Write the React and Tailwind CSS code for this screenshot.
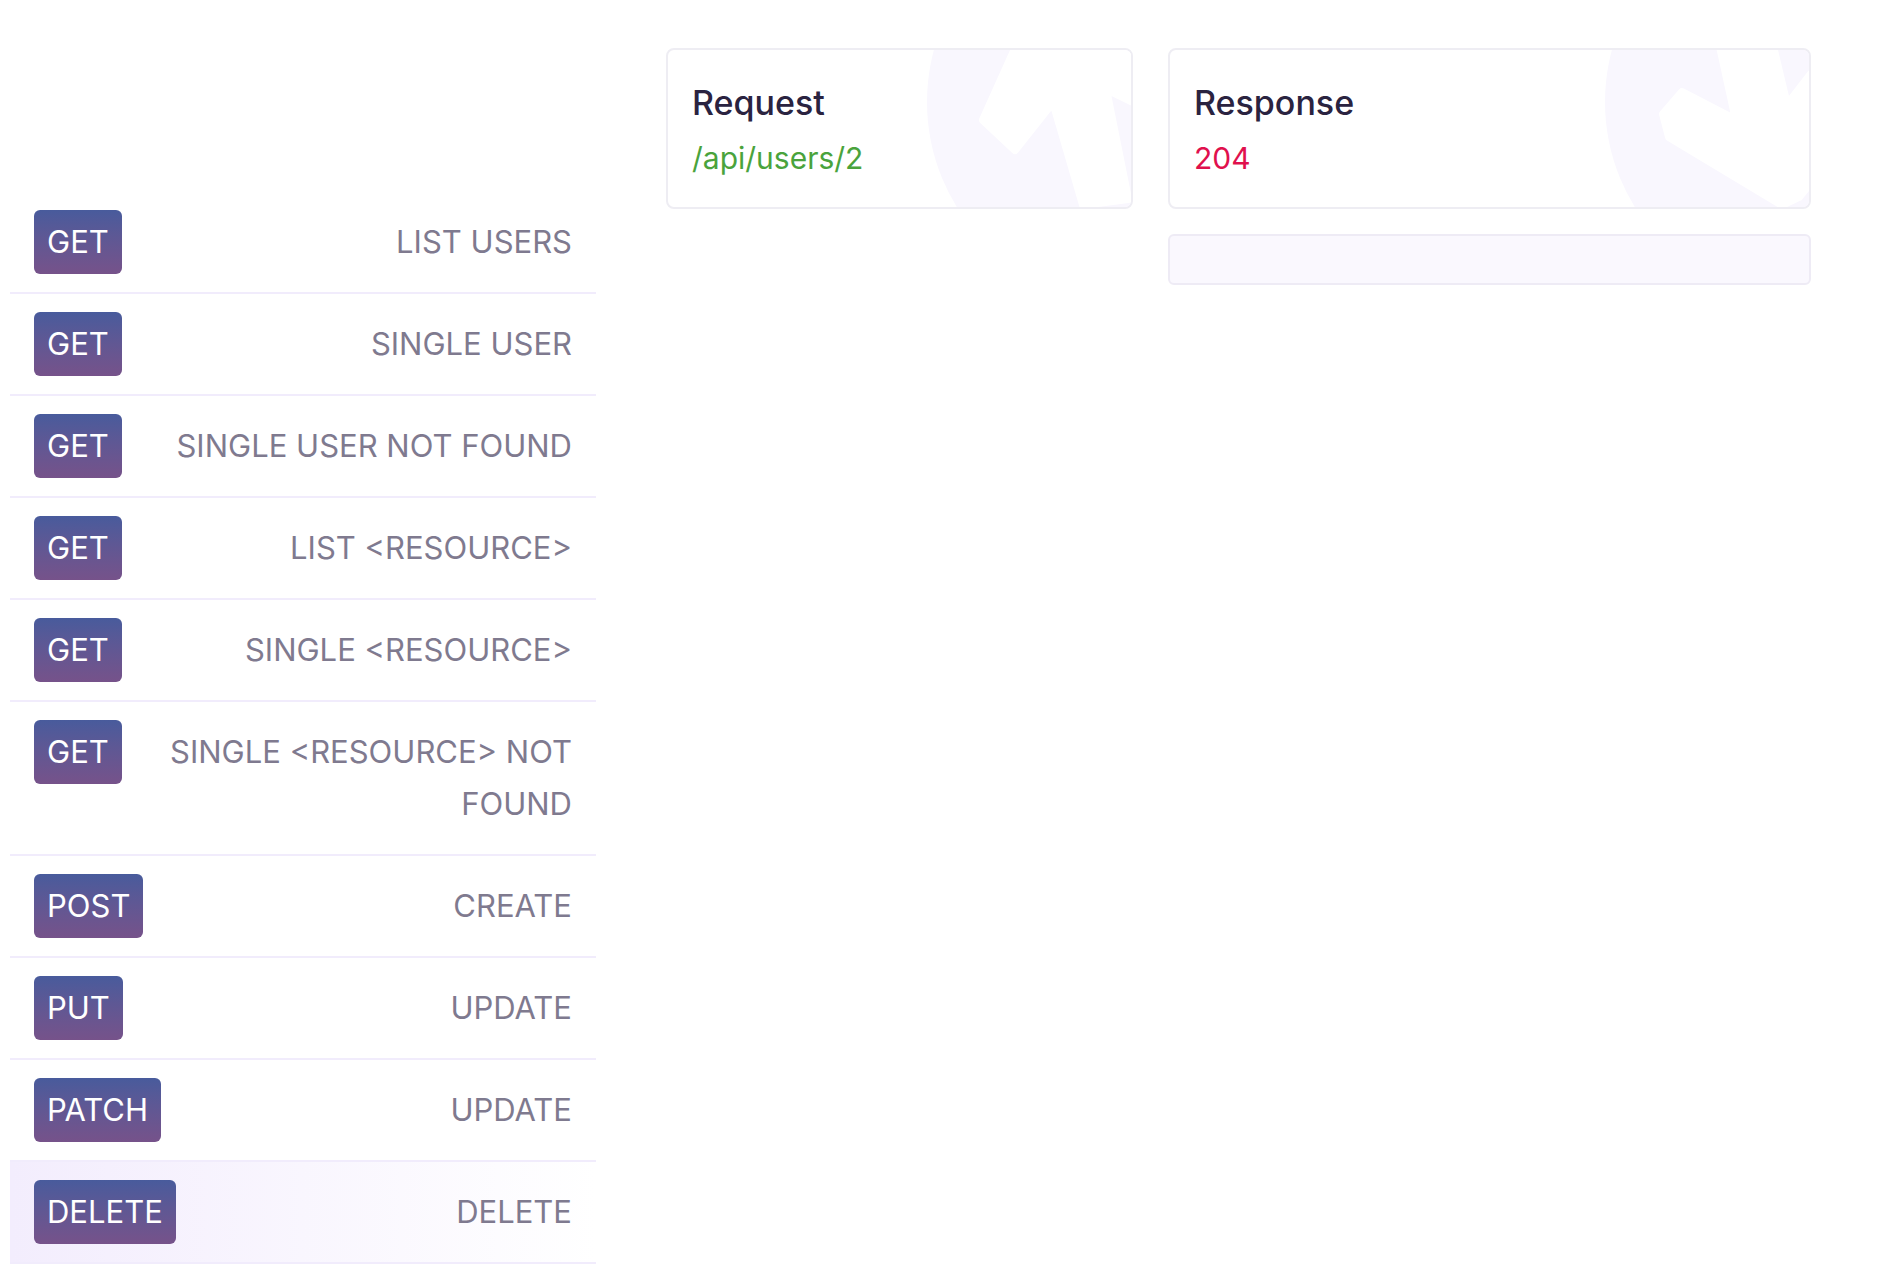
import React from 'react';

const endpoints = [
  { method: 'GET', label: 'LIST USERS' },
  { method: 'GET', label: 'SINGLE USER' },
  { method: 'GET', label: 'SINGLE USER NOT FOUND' },
  { method: 'GET', label: 'LIST <RESOURCE>' },
  { method: 'GET', label: 'SINGLE <RESOURCE>' },
  { method: 'GET', label: 'SINGLE <RESOURCE> NOT FOUND' },
  { method: 'POST', label: 'CREATE' },
  { method: 'PUT', label: 'UPDATE' },
  { method: 'PATCH', label: 'UPDATE' },
  { method: 'DELETE', label: 'DELETE', active: true },
];

// faint logo drawn behind the card content
const Watermark = ({ kind }) => (
  <svg
    className="absolute right-0 top-0 pointer-events-none"
    width="260"
    height="161"
    viewBox="0 0 260 161"
  >
    <circle cx="256" cy="52" r="200" fill="#f9f7fe" />
    {kind === 'up' ? (
      <polygon
        points="147,-8 112,70 144,100 182,52 212,155 257,149 235,39 262,52 262,-8"
        fill="#ffffff"
        stroke="#ffffff"
        strokeWidth="8"
        strokeLinejoin="round"
      />
    ) : (
      <polygon
        points="170,-8 187,70 133,42 114,64 120,87 233,155 250,147 262,132 262,24 238,55 223,-8"
        fill="#ffffff"
        stroke="#ffffff"
        strokeWidth="8"
        strokeLinejoin="round"
      />
    )}
  </svg>
);

const EndpointRow = ({ method, label, active }) => (
  <li
    className={`flex items-start justify-between gap-6 px-6 py-[18px] border-b-2 border-[#f1ecfc] ${
      active ? 'bg-gradient-to-r from-[#f3edfd] to-[#ffffff]' : ''
    }`}
  >
    <span className="shrink-0 h-16 flex items-center px-[13px] rounded-md bg-gradient-to-b from-[#485b9c] to-[#76528a] text-white text-[31px]">
      {method}
    </span>
    <span className="py-[6px] text-right text-[31px] leading-[52px] text-[#7f7a8f]">
      {label}
    </span>
  </li>
);

const App = () => {
  return (
    <div
      className="min-h-screen bg-white flex pl-[10px]"
      style={{ fontFamily: 'Inter, "Noto Sans", sans-serif' }}
    >
      <ul className="w-[586px] shrink-0 pt-[192px]">
        {endpoints.map((e, i) => (
          <EndpointRow key={i} {...e} />
        ))}
      </ul>

      <div className="ml-[70px] pt-[48px] flex items-start gap-[35px]">
        <div className="relative overflow-hidden w-[467px] h-[161px] rounded-lg border-2 border-[#eeedf3] bg-white px-[24px] pt-[30px]">
          <Watermark kind="up" />
          <div className="relative">
            <h2 className="text-[34px] leading-[46px] font-medium text-[#2a2340]">Request</h2>
            <p className="mt-[7px] text-[30px] leading-[50px] text-[#4aa33c]">/api/users/2</p>
          </div>
        </div>

        <div className="w-[643px] flex flex-col gap-[25px]">
          <div className="relative overflow-hidden h-[161px] rounded-lg border-2 border-[#eeedf3] bg-white px-[24px] pt-[30px]">
            <Watermark kind="down" />
            <div className="relative">
              <h2 className="text-[34px] leading-[46px] font-medium text-[#2a2340]">Response</h2>
              <p className="mt-[7px] text-[30px] leading-[50px] text-[#e0104d]">204</p>
            </div>
          </div>
          <div className="h-[51px] rounded-md border-2 border-[#eeebf5] bg-[#faf8fe]"></div>
        </div>
      </div>
    </div>
  );
};

export default App;
